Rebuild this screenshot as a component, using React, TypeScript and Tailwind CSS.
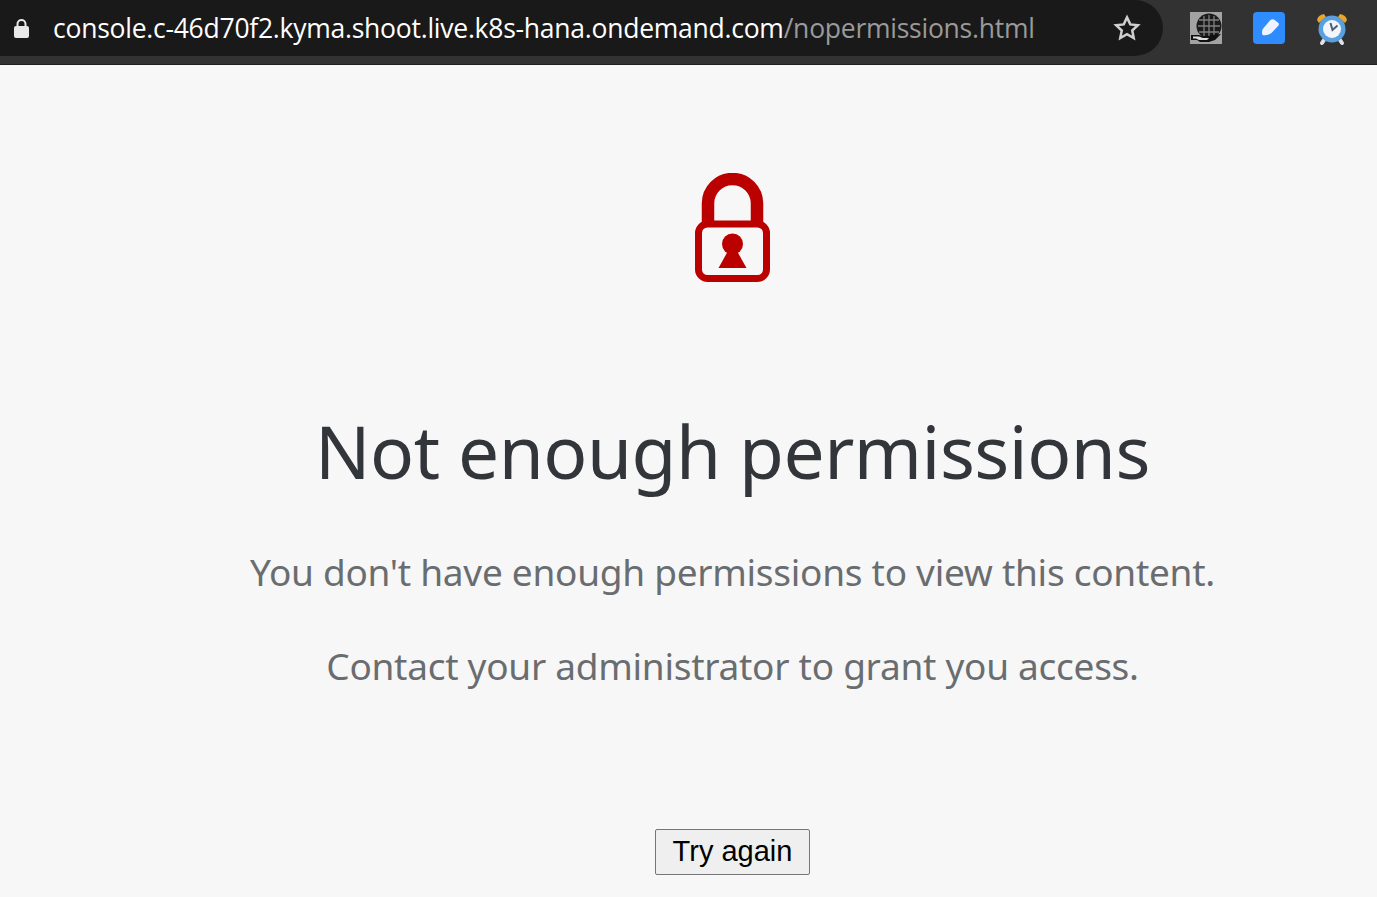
function LockIcon() {
  return (
    <svg width="75" height="109" viewBox="0 0 75 109" fill="none">
      <path d="M13 52V30.500a24.500 24.500 0 0 1 49 0V52" stroke="#bb0000" strokeWidth="12.500" />
      <rect x="3.500" y="51" width="68" height="54.500" rx="9" stroke="#bb0000" strokeWidth="7" />
      <circle cx="37.500" cy="71" r="10.500" fill="#bb0000" />
      <path d="M33 78h9l9.500 17h-28z" fill="#bb0000" />
    </svg>
  );
}

function GlobeExtension() {
  return (
    <svg width="32" height="32" viewBox="0 0 32 32" className="blur-[0.4px]">
      <rect width="32" height="32" fill="#a3a3a3" />
      <circle cx="19" cy="14" r="12.500" fill="#1b1b1b" />
      <g stroke="#7f7f7f" strokeWidth="1.300" fill="none">
        <path d="M9 8h20M8 14h22M9 20h20M14 4v20M19 3v22M24 4v20" />
      </g>
      <path d="M1 23h8l4 1h6l3-1 9-1-6 6-6 2H10l-3-2H1z" fill="#111" />
      <path d="M3 24.500h6l4 1.500h6l-2 2H9l-3-1.500H3z" fill="#dcdcdc" />
    </svg>
  );
}

function NoteExtension() {
  return (
    <svg width="32" height="32" viewBox="0 0 32 32">
      <rect width="32" height="32" rx="4" fill="#2e8cff" />
      <path d="M9 21q0-4 2-5.500l6-7q2-2 4-1l4.500 3.500q1 1.500-.5 3l-6.500 7q-4.500 3-9 2z" fill="#eef4ff" />
    </svg>
  );
}

function ClockExtension() {
  return (
    <svg width="32" height="34" viewBox="0 0 32 34" className="blur-[0.3px]">
      <path d="M1 8q1-5 7-6l2 3-7 6z" fill="#e8a62b" />
      <path d="M31 8q-1-5-7-6l-2 3 7 6z" fill="#e8a62b" />
      <path d="M8 28l-2 3M24 28l2 3" stroke="#dfe3e7" strokeWidth="4" strokeLinecap="round" />
      <circle cx="16" cy="17" r="13.500" fill="#5a9fe0" />
      <circle cx="16" cy="17" r="9" fill="#f2f6fa" />
      <path d="M14.500 11l2 7 5-4.500" stroke="#4a5f74" strokeWidth="2" fill="none" />
    </svg>
  );
}

export default function App() {
  return (
    <div className="flex h-[897px] flex-col overflow-hidden bg-[#f7f7f7]">
      <div className="flex h-[65px] shrink-0 items-start border-b border-[#202020] bg-[#323232]">
        <div className="flex h-[56px] w-[1163px] items-center rounded-r-[28px] bg-[#191919] pl-[13px] pr-[21px]">
          <svg width="17" height="21" viewBox="0 0 17 21" className="shrink-0">
            <path d="M4.500 9V6a4 4 0 0 1 8 0v3" fill="none" stroke="#e8e8e8" strokeWidth="2" />
            <rect x="1" y="8" width="15" height="12" rx="2" fill="#e8e8e8" />
          </svg>
          <div className="ml-[23px] mt-[2px] flex-1 whitespace-nowrap font-['Open_Sans',sans-serif] text-[26.500px] tracking-[-0.25px] text-white">
            console.c-46d70f2.kyma.shoot.live.k8s-hana.ondemand.com
            <span className="text-[#9a9a9a]">/nopermissions.html</span>
          </div>
          <svg width="30" height="30" viewBox="0 0 24 24" fill="none" stroke="#cfcfcf" strokeWidth="2" className="shrink-0">
            <path d="M12 3.500l2.600 5.600 6.100.7-4.500 4.200 1.200 6-5.400-3-5.400 3 1.200-6-4.500-4.200 6.100-.7z" />
          </svg>
        </div>
        <div className="ml-[27px] mt-[12px] flex items-start gap-[31px]">
          <GlobeExtension />
          <NoteExtension />
          <ClockExtension />
        </div>
      </div>

      <div className="flex w-[1377px] flex-col items-center">
        <div className="ml-[88px] flex w-[1200px] flex-col items-center">
          <div className="mt-[108px] flex h-[109px]">
            <LockIcon />
          </div>
          <h1 className="mt-[119px] whitespace-nowrap font-['Noto_Sans',sans-serif] text-[73px] leading-[100px] tracking-[-0.5px] text-[#32363a]">
            Not enough permissions
          </h1>
          <p className="mt-[46px] whitespace-nowrap font-['Noto_Sans',sans-serif] text-[37px] leading-[50px] tracking-[-0.27px] text-[#6a6d70]">
            You don't have enough permissions to view this content.
          </p>
          <p className="mt-[44px] whitespace-nowrap font-['Noto_Sans',sans-serif] text-[37px] leading-[50px] tracking-[-0.27px] text-[#6a6d70]">
            Contact your administrator to grant you access.
          </p>
          <button className="mt-[138px] h-[46px] w-[155px] rounded-[2px] border border-[#767676] bg-[#efefef] font-['Liberation_Sans',sans-serif] text-[29px] text-black">
            Try again
          </button>
        </div>
      </div>
    </div>
  );
}
